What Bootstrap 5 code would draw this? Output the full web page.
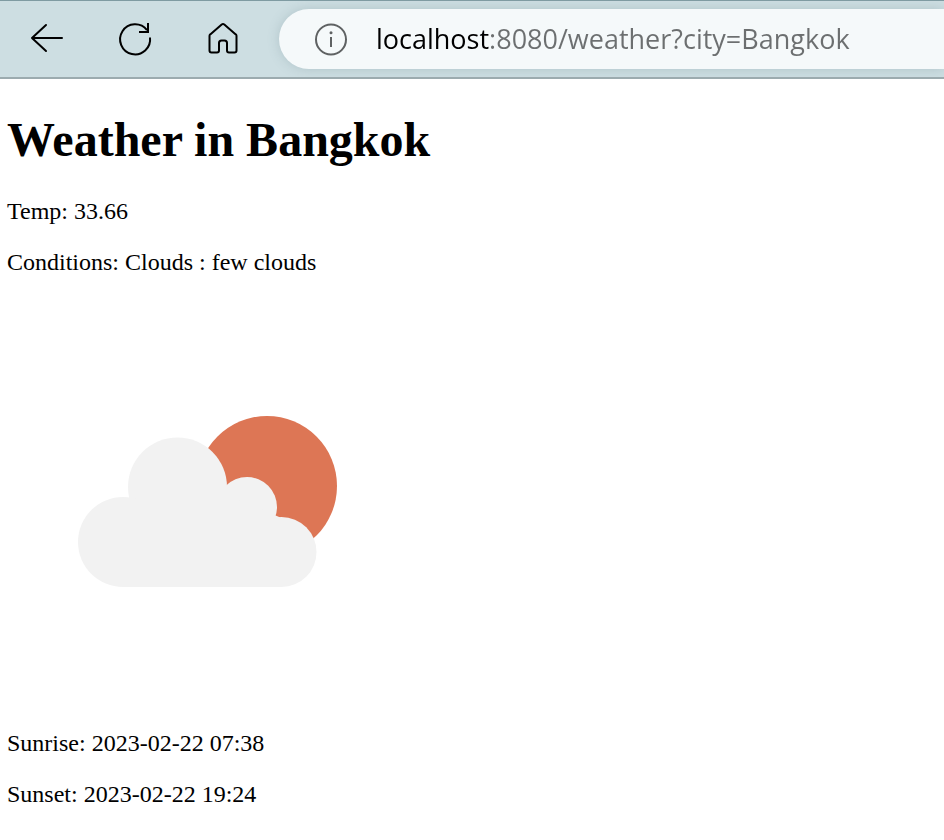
<!DOCTYPE html>
<html lang="en">
<head>
<meta charset="utf-8">
<meta name="viewport" content="width=device-width, initial-scale=1">
<title>Weather in Bangkok</title>
<link href="https://cdn.jsdelivr.net/npm/bootstrap@5.3.0/dist/css/bootstrap.min.css" rel="stylesheet">
<style>
  body { background: #fff; color: #000; }
  .browser-bar {
    height: 79px;
    background: #cddee2;
    border-top: 1px solid #7f9ba2;
    border-bottom: 2px solid #9cabaf;
    padding-left: 23px;
    gap: 32px;
    overflow: hidden;
  }
  .tools { gap: 40px; }
  .tool-btn { width: 48px; height: 48px; line-height: 0; }
  .address {
    height: 60px;
    background: #f5f9fa;
    border-radius: 30px 0 0 30px;
    box-shadow: 0 0 12px rgba(90, 120, 128, .25);
    padding-left: 36px;
  }
  .address-input {
    font: 27px/40px "Open Sans", "Noto Sans", sans-serif;
    margin-left: 28px;
    color: transparent;
    caret-color: #000;
    background: linear-gradient(90deg, #000 113px, #6c6f70 113px);
    -webkit-background-clip: text;
    background-clip: text;
    outline: 0;
  }
  .weather {
    font: 24px/27px "Liberation Serif", "Times New Roman", serif;
    padding: 32px 7px 0;
  }
  .weather h1 { font-size: 48px; line-height: 57px; font-weight: 700; margin-bottom: 30px; }
  .weather p { margin-bottom: 24px; }
  .weather .icon-row { padding-bottom: 6px; }
  .weather-icon { width: 400px; }
</style>
</head>
<body>
<header class="browser-bar d-flex align-items-center">
  <div class="tools d-flex flex-shrink-0">
    <button type="button" class="tool-btn btn p-0 border-0" aria-label="Back">
      <svg width="48" height="48" viewBox="0 0 48 48" fill="none" stroke="#000" stroke-width="2" stroke-linecap="round" stroke-linejoin="round"><path d="M39 23H9M23 10 9 23 23 36"/></svg>
    </button>
    <button type="button" class="tool-btn btn p-0 border-0" aria-label="Refresh">
      <svg width="48" height="48" viewBox="0 0 48 48" fill="none" stroke="#000" stroke-width="2"><path d="M39 22.500A15 15 0 1 1 36 15.200M37 8V17H28"/></svg>
    </button>
    <button type="button" class="tool-btn btn p-0 border-0" aria-label="Home">
      <svg width="48" height="48" viewBox="0 0 48 48" fill="none" stroke="#000" stroke-width="2" stroke-linejoin="round"><path d="M22.700 9.500a2 2 0 0 1 2.600 0L36.500 19.200a2 2 0 0 1 1 1.600V35.500a2 2 0 0 1-2 2H30a2 2 0 0 1-2-2V28a2.500 2.500 0 0 0-2.500-2.500h-3A2.500 2.500 0 0 0 20 28v7.500a2 2 0 0 1-2 2H12.500a2 2 0 0 1-2-2V20.800a2 2 0 0 1 1-1.600Z"/></svg>
    </button>
  </div>
  <div class="address d-flex align-items-center flex-grow-1">
    <svg class="flex-shrink-0" width="33" height="33" viewBox="0 0 33 33" aria-hidden="true"><circle cx="16" cy="16.500" r="15" fill="none" stroke="#5f6263" stroke-width="2"/><path d="M16 14v10" stroke="#5f6263" stroke-width="2"/><circle cx="16" cy="9.800" r="1.500" fill="#5f6263"/></svg>
    <input class="address-input border-0 p-0 flex-grow-1 w-100" type="text" aria-label="Address" value="localhost:8080/weather?city=Bangkok" spellcheck="false">
  </div>
</header>
<main class="weather">
  <h1>Weather in Bangkok</h1>
  <p>Temp: 33.66</p>
  <p>Conditions: Clouds : few clouds</p>
  <p class="icon-row"><svg class="weather-icon img-fluid d-block" viewBox="8 300 400 400" role="img" aria-label="Few clouds">
    <circle cx="268" cy="486" r="70" fill="#dd7655"/>
    <g fill="#f2f2f2">
      <circle cx="178.500" cy="487" r="49.500"/>
      <circle cx="248" cy="507" r="30"/>
      <circle cx="124" cy="542" r="45"/>
      <circle cx="282.500" cy="552" r="35"/>
      <path d="M124 500H150L200 490L240 500L282.500 518V587H124Z"/>
    </g>
  </svg></p>
  <p>Sunrise: 2023-02-22 07:38</p>
  <p>Sunset: 2023-02-22 19:24</p>
</main>
<script src="https://cdn.jsdelivr.net/npm/bootstrap@5.3.0/dist/js/bootstrap.bundle.min.js"></script>
</body>
</html>
